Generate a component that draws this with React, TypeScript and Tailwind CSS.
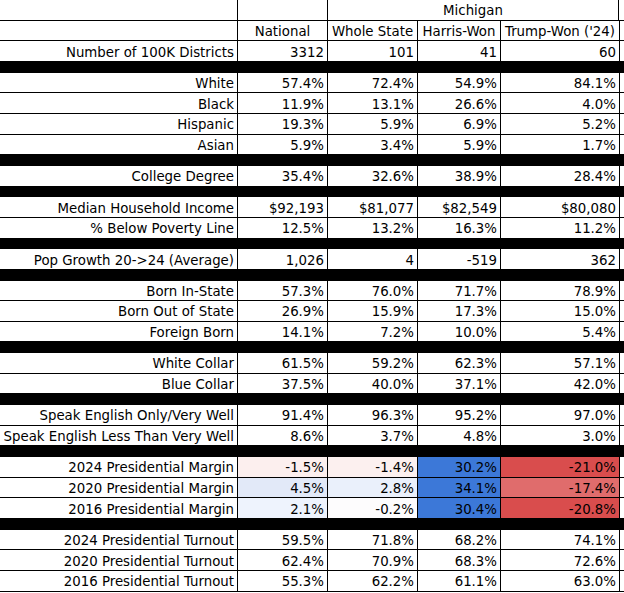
type Row = { label: string; values: string[]; colors?: string[] }

const groups: Row[][] = [
  [{ label: 'Number of 100K Districts', values: ['3312', '101', '41', '60'] }],
  [
    { label: 'White', values: ['57.4%', '72.4%', '54.9%', '84.1%'] },
    { label: 'Black', values: ['11.9%', '13.1%', '26.6%', '4.0%'] },
    { label: 'Hispanic', values: ['19.3%', '5.9%', '6.9%', '5.2%'] },
    { label: 'Asian', values: ['5.9%', '3.4%', '5.9%', '1.7%'] },
  ],
  [{ label: 'College Degree', values: ['35.4%', '32.6%', '38.9%', '28.4%'] }],
  [
    { label: 'Median Household Income', values: ['$92,193', '$81,077', '$82,549', '$80,080'] },
    { label: '% Below Poverty Line', values: ['12.5%', '13.2%', '16.3%', '11.2%'] },
  ],
  [{ label: 'Pop Growth 20->24 (Average)', values: ['1,026', '4', '-519', '362'] }],
  [
    { label: 'Born In-State', values: ['57.3%', '76.0%', '71.7%', '78.9%'] },
    { label: 'Born Out of State', values: ['26.9%', '15.9%', '17.3%', '15.0%'] },
    { label: 'Foreign Born', values: ['14.1%', '7.2%', '10.0%', '5.4%'] },
  ],
  [
    { label: 'White Collar', values: ['61.5%', '59.2%', '62.3%', '57.1%'] },
    { label: 'Blue Collar', values: ['37.5%', '40.0%', '37.1%', '42.0%'] },
  ],
  [
    { label: 'Speak English Only/Very Well', values: ['91.4%', '96.3%', '95.2%', '97.0%'] },
    { label: 'Speak English Less Than Very Well', values: ['8.6%', '3.7%', '4.8%', '3.0%'] },
  ],
  [
    {
      label: '2024 Presidential Margin',
      values: ['-1.5%', '-1.4%', '30.2%', '-21.0%'],
      colors: ['bg-[#fcefee]', 'bg-[#fcf0ef]', 'bg-[#3c78d8]', 'bg-[#d94d4d]'],
    },
    {
      label: '2020 Presidential Margin',
      values: ['4.5%', '2.8%', '34.1%', '-17.4%'],
      colors: ['bg-[#e2e9f8]', 'bg-[#eaf0fb]', 'bg-[#3c78d8]', 'bg-[#e06c6c]'],
    },
    {
      label: '2016 Presidential Margin',
      values: ['2.1%', '-0.2%', '30.4%', '-20.8%'],
      colors: ['bg-[#eef3fd]', 'bg-[#fdfcfd]', 'bg-[#3c78d8]', 'bg-[#d94d4d]'],
    },
  ],
  [
    { label: '2024 Presidential Turnout', values: ['59.5%', '71.8%', '68.2%', '74.1%'] },
    { label: '2020 Presidential Turnout', values: ['62.4%', '70.9%', '68.3%', '72.6%'] },
    { label: '2016 Presidential Turnout', values: ['55.3%', '62.2%', '61.1%', '63.0%'] },
  ],
]

const rowGrid = 'grid h-[20.67px] grid-cols-[238px_90px_90px_83px_119px_1fr] border-b border-black'
const cell = 'flex items-end border-r border-black px-[3px] pb-[2px]'

function DataRow({ row }: { row: Row }) {
  return (
    <div className={rowGrid}>
      <div className={`${cell} justify-end`}>{row.label}</div>
      {row.values.map((v, i) => (
        <div key={i} className={`${cell} justify-end ${row.colors ? row.colors[i] : ''}`}>
          {v}
        </div>
      ))}
      <div />
    </div>
  )
}

export default function App() {
  return (
    <div
      className="w-[624px] bg-white text-[13.33px] leading-none text-black"
      style={{ fontFamily: '"DejaVu Sans", Verdana, sans-serif' }}
    >
      {/* header rows */}
      <div className="grid h-[20.67px] grid-cols-[238px_90px_291px_1fr] border-b border-black">
        <div className="border-r border-black" />
        <div className="border-r border-black" />
        <div className={`${cell} justify-center`}>Michigan</div>
        <div />
      </div>
      <div className={rowGrid}>
        <div className="border-r border-black" />
        <div className={`${cell} justify-center`}>National</div>
        <div className={`${cell} justify-center`}>Whole State</div>
        <div className={`${cell} justify-center`}>Harris-Won</div>
        <div className={`${cell} justify-center`}>Trump-Won ('24)</div>
        <div />
      </div>

      {groups.map((g, gi) => (
        <div key={gi}>
          {g.map((r) => (
            <DataRow key={r.label} row={r} />
          ))}
          {gi < groups.length - 1 && <div className="h-[10.67px] bg-black" />}
        </div>
      ))}
    </div>
  )
}
